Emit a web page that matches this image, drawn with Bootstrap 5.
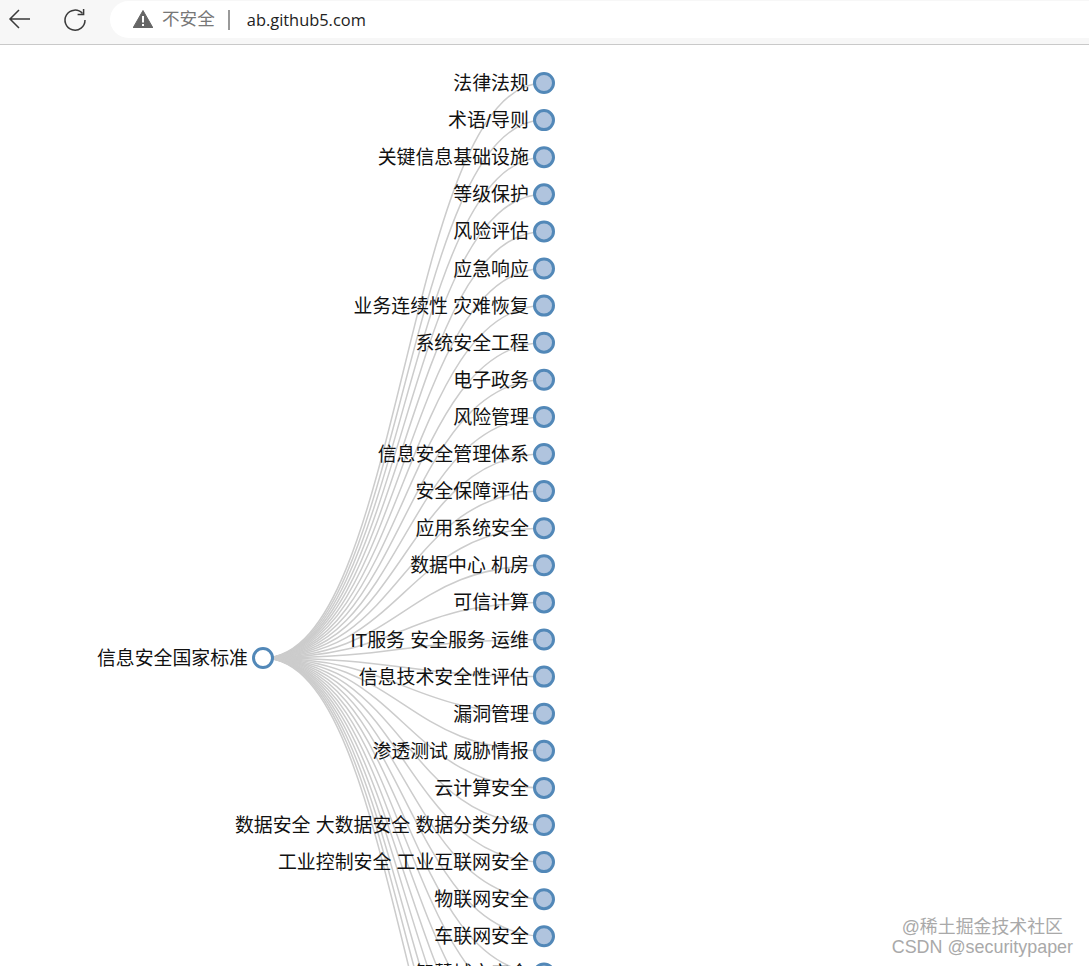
<!DOCTYPE html>
<html lang="zh">
<head>
<meta charset="utf-8">
<link href="https://cdn.jsdelivr.net/npm/bootstrap@5.3.0/dist/css/bootstrap.min.css" rel="stylesheet">
<style>
html,body{height:966px;overflow:hidden;background:#fff}
.browser-bar{height:45px;background:#f7f7f7;border-bottom:1px solid #c9c9c9;padding:1px 0 6px 0}
.nav-ico{flex:none}
.ico-back{margin:0 0 1px 8px}
.ico-reload{margin:1px 0 0 31px}
.addr-pill{margin-left:23px;background:#fff;border-radius:19px 0 0 19px;height:37px;padding-left:23px;font:17.6px/37px "Liberation Sans","Noto Sans CJK SC",sans-serif}
.addr-warn-ico{margin-bottom:2px}
.addr-warn{color:#777;margin-left:9px}
.addr-sep{width:2px;height:20px;background:#999;margin:0 17px 0 13px}
.addr-host{color:#222;font-family:"Open Sans","Liberation Sans",sans-serif;font-size:16.4px}
.tree-canvas{display:block}
.tree-link{fill:none;stroke:#ccc;stroke-width:1.5}
.tree-node{fill:#b0c4de;stroke:#5288b8;stroke-width:3}
.tree-root{fill:#fff;stroke:#5288b8;stroke-width:3}
.tree-label{font:18.9px "Liberation Sans","Noto Sans CJK SC",sans-serif;fill:#111;text-anchor:end}
.mark-wrap{position:absolute;right:16px;bottom:9px;text-align:right;color:#a9a9a9;font:17.9px/20px "Liberation Sans","Noto Sans CJK SC",sans-serif;pointer-events:none}
.mark-line1{margin-right:10px}
</style>
</head>
<body class="position-relative">
<div class="browser-bar d-flex align-items-center">
  <svg class="nav-ico ico-back" width="24" height="24" viewBox="0 0 24 24" fill="none" stroke="#3a3a3a" stroke-width="1.5"><path d="M22 12H2.5M11 3l-9 9 9 9"/></svg>
  <svg class="nav-ico ico-reload" width="24" height="24" viewBox="0 0 24 24" fill="none" stroke="#3a3a3a" stroke-width="1.5"><path d="M19.5 5.5A10 10 0 1 0 22 12"/><path d="M20.6 1v5.5h-6"/></svg>
  <div class="addr-pill flex-grow-1 d-flex align-items-center">
    <svg class="addr-warn-ico" width="20" height="18" viewBox="0 0 20 18"><path d="M10 0.5 20 18H0Z" fill="#666" stroke="#666" stroke-linejoin="round"/><rect x="9" y="6" width="2" height="6.5" fill="#fff"/><rect x="9" y="14" width="2" height="2" fill="#fff"/></svg>
    <span class="addr-warn">不安全</span><span class="addr-sep"></span><span class="addr-host">ab.github5.com</span>
  </div>
</div>
<svg id="tree" class="tree-canvas" width="1089" height="921" viewBox="0 45 1089 921"></svg>
<div class="mark-wrap"><div class="mark-line1">@稀土掘金技术社区</div><div>CSDN @securitypaper</div></div>
<script>
var labels=["法律法规","术语/导则","关键信息基础设施","等级保护","风险评估","应急响应","业务连续性 灾难恢复","系统安全工程","电子政务","风险管理","信息安全管理体系","安全保障评估","应用系统安全","数据中心 机房","可信计算","IT服务 安全服务 运维","信息技术安全性评估","漏洞管理","渗透测试 威胁情报","云计算安全","数据安全 大数据安全 数据分类分级","工业控制安全 工业互联网安全","物联网安全","车联网安全","智慧城市安全","","","","","","",""];
var rx=263,ry=658,nx=544,mx=403.5,html="";
labels.forEach(function(t,i){var y=83+37.1*i;html+='<path class="tree-link" d="M'+rx+','+ry+'C'+mx+','+ry+' '+mx+','+y+' '+nx+','+y+'"/>';});
labels.forEach(function(t,i){var y=83+37.1*i;if(y<1000){html+='<circle class="tree-node" cx="'+nx+'" cy="'+y+'" r="9.5"/><text class="tree-label" x="528.8" y="'+(y+7)+'">'+t+'</text>';}});
html+='<circle class="tree-root" cx="'+rx+'" cy="'+ry+'" r="9.5"/><text class="tree-label" x="248" y="'+(ry+7)+'">信息安全国家标准</text>';
document.getElementById("tree").innerHTML=html;
</script>
<script src="https://cdn.jsdelivr.net/npm/bootstrap@5.3.0/dist/js/bootstrap.bundle.min.js"></script>
</body>
</html>
